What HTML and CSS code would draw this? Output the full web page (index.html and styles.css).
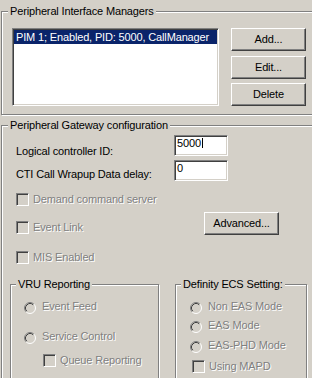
FILE: index.html
```html
<!DOCTYPE html>
<html>
<head>
<meta charset="utf-8">
<link rel="stylesheet" href="styles.css">
</head>
<body>
<section class="grp g-pim">
  <span class="legend">Peripheral Interface Managers</span>
  <div class="pim-row">
    <div class="listbox">
      <div class="item sel">PIM 1; Enabled, PID: 5000, CallManager</div>
    </div>
    <div class="btn-col">
      <button class="btn">Add...</button>
      <button class="btn b-edit">Edit...</button>
      <button class="btn b-del">Delete</button>
    </div>
  </div>
</section>

<section class="grp g-pg">
  <span class="legend">Peripheral Gateway configuration</span>
  <div class="frow r1">
    <span class="flabel">Logical controller ID:</span>
    <div class="edit">5000<span class="caret"></span></div>
  </div>
  <div class="frow r2">
    <span class="flabel">CTI Call Wrapup Data delay:</span>
    <div class="edit">0</div>
  </div>
  <div class="crow c-demand">
    <span class="cb"></span><span class="dis ctext">Demand command server</span>
  </div>
  <div class="crow c-event">
    <div class="chk">
      <span class="cb"></span><span class="dis ctext">Event Link</span>
    </div>
    <button class="btn">Advanced...</button>
  </div>
  <div class="crow c-mis">
    <span class="cb"></span><span class="dis ctext">MIS Enabled</span>
  </div>
  <div class="subgroups">
    <section class="grp g-vru">
      <span class="legend">VRU Reporting</span>
      <div class="rrow v-feed">
        <svg class="radio" width="12" height="12" viewBox="0 0 12 12"><circle cx="6" cy="6" r="5" fill="#D4D0C8"/><path d="M2.11 9.89A5.5 5.5 0 0 1 9.89 2.11" fill="none" stroke="#808080"/><path d="M9.89 2.11A5.5 5.5 0 0 1 2.11 9.89" fill="none" stroke="#fff"/><path d="M2.82 9.18A4.5 4.5 0 0 1 9.18 2.82" fill="none" stroke="#404040"/></svg>
        <span class="dis rtext">Event Feed</span>
      </div>
      <div class="rrow v-svc">
        <svg class="radio" width="12" height="12" viewBox="0 0 12 12"><circle cx="6" cy="6" r="5" fill="#D4D0C8"/><path d="M2.11 9.89A5.5 5.5 0 0 1 9.89 2.11" fill="none" stroke="#808080"/><path d="M9.89 2.11A5.5 5.5 0 0 1 2.11 9.89" fill="none" stroke="#fff"/><path d="M2.82 9.18A4.5 4.5 0 0 1 9.18 2.82" fill="none" stroke="#404040"/></svg>
        <span class="dis rtext">Service Control</span>
      </div>
      <div class="crow v-queue">
        <span class="cb"></span><span class="dis ctext">Queue Reporting</span>
      </div>
    </section>
    <section class="grp g-def">
      <span class="legend">Definity ECS Setting:</span>
      <div class="rrow d-non">
        <svg class="radio" width="12" height="12" viewBox="0 0 12 12"><circle cx="6" cy="6" r="5" fill="#D4D0C8"/><path d="M2.11 9.89A5.5 5.5 0 0 1 9.89 2.11" fill="none" stroke="#808080"/><path d="M9.89 2.11A5.5 5.5 0 0 1 2.11 9.89" fill="none" stroke="#fff"/><path d="M2.82 9.18A4.5 4.5 0 0 1 9.18 2.82" fill="none" stroke="#404040"/></svg>
        <span class="dis rtext">Non EAS Mode</span>
      </div>
      <div class="rrow d-eas">
        <svg class="radio" width="12" height="12" viewBox="0 0 12 12"><circle cx="6" cy="6" r="5" fill="#D4D0C8"/><path d="M2.11 9.89A5.5 5.5 0 0 1 9.89 2.11" fill="none" stroke="#808080"/><path d="M9.89 2.11A5.5 5.5 0 0 1 2.11 9.89" fill="none" stroke="#fff"/><path d="M2.82 9.18A4.5 4.5 0 0 1 9.18 2.82" fill="none" stroke="#404040"/></svg>
        <span class="dis rtext">EAS Mode</span>
      </div>
      <div class="rrow d-phd">
        <svg class="radio" width="12" height="12" viewBox="0 0 12 12"><circle cx="6" cy="6" r="5" fill="#D4D0C8"/><path d="M2.11 9.89A5.5 5.5 0 0 1 9.89 2.11" fill="none" stroke="#808080"/><path d="M9.89 2.11A5.5 5.5 0 0 1 2.11 9.89" fill="none" stroke="#fff"/><path d="M2.82 9.18A4.5 4.5 0 0 1 9.18 2.82" fill="none" stroke="#404040"/></svg>
        <span class="dis rtext">EAS-PHD Mode</span>
      </div>
      <div class="crow d-mapd">
        <span class="cb"></span><span class="dis ctext">Using MAPD</span>
      </div>
    </section>
  </div>
</section>
</body>
</html>
```

FILE: styles.css
```css
* { box-sizing: border-box; }
html, body { margin: 0; padding: 0; }
body {
  width: 312px;
  height: 378px;
  overflow: hidden;
  background: #D4D0C8;
  color: #000;
  font-family: "Liberation Sans", Arial, sans-serif;
  font-size: 11px;
  line-height: 13px;
  letter-spacing: -0.15px;
}

/* etched group box */
.grp {
  border: 1px solid #808080;
  box-shadow: inset 1px 1px 0 #fff, 1px 1px 0 #fff;
  display: flex;
  flex-direction: column;
  align-items: flex-start;
  flex: none;
}
.legend {
  margin: -7px 0 0 6px;
  padding: 0 2px;
  background: #D4D0C8;
  line-height: 13px;
  white-space: nowrap;
}

/* the outer group boxes continue past the right edge of the crop */
.g-pim { margin: 11px 0 0 1px; width: 311px; height: 104px; border-right: 0; }
.pim-row { display: flex; margin: 10px 0 0 10px; }

.listbox {
  width: 207px;
  height: 78px;
  background: #fff;
  border: 1px solid;
  border-color: #808080 #fff #fff #808080;
  box-shadow: inset 1px 1px 0 #404040, inset -1px -1px 0 #D4D0C8;
  padding: 1px;
}
.item { height: 14px; line-height: 14px; padding-left: 2px; white-space: nowrap; }
.item.sel { background: #0A246A; color: #fff; }

.btn-col { display: flex; flex-direction: column; margin-left: 12px; }
.btn {
  width: 75px;
  height: 23px;
  padding: 0;
  margin: 0;
  font: inherit;
  letter-spacing: inherit;
  color: #000;
  background: #D4D0C8;
  border: 1px solid;
  border-color: #fff #404040 #404040 #fff;
  box-shadow: inset -1px -1px 0 #808080;
  border-radius: 0;
  display: flex;
  align-items: center;
  justify-content: center;
}
.b-edit { margin-top: 5px; }
.b-del { margin-top: 4px; }

/* continues past the right and bottom edges of the crop */
.g-pg { margin: 10px 0 0 1px; width: 311px; height: 253px; border-right: 0; border-bottom: 0; }

.frow { display: flex; height: 21px; margin-left: 14px; }
.r1 { margin-top: 3px; }
.r2 { margin-top: 4px; }
.flabel { width: 158px; white-space: nowrap; }
.r1 .flabel { margin-top: 10px; }
.r2 .flabel { margin-top: 8px; }

.edit {
  width: 54px;
  height: 21px;
  background: #fff;
  border: 1px solid;
  border-color: #808080 #fff #fff #808080;
  box-shadow: inset 1px 1px 0 #404040, inset -1px -1px 0 #D4D0C8;
  padding: 1px 2px;
  line-height: 13px;
  white-space: nowrap;
}
.caret {
  display: inline-block;
  width: 1px;
  height: 10px;
  background: #000;
  vertical-align: -1px;
  margin-left: 1px;
}

.crow { display: flex; align-items: flex-start; }
.cb {
  width: 13px;
  height: 13px;
  flex: none;
  background: #D4D0C8;
  border: 1px solid;
  border-color: #808080 #fff #fff #808080;
  box-shadow: inset 1px 1px 0 #404040, inset -1px -1px 0 #D4D0C8;
}
.ctext { margin-left: 4px; white-space: nowrap; }
.dis { color: #808080; text-shadow: 1px 1px 0 #fff; }

.c-demand { margin: 12px 0 0 14px; }
.c-event { margin: 6px 0 0 14px; }
.c-event .chk { display: flex; align-items: flex-start; width: 188px; margin-top: 9px; }
.c-mis { margin: 16px 0 0 14px; }

.subgroups { display: flex; margin: 20px 0 0 8px; }
/* inner group boxes continue past the bottom edge of the crop */
.g-vru { width: 149px; height: 94px; border-bottom: 0; }
.g-def { width: 132px; height: 94px; margin-left: 16px; border-bottom: 0; }
.g-vru .legend, .g-def .legend { margin-left: 5px; }

.rrow { display: flex; align-items: flex-start; }
.radio { flex: none; display: block; }
.rtext { margin: -2px 0 0 6px; white-space: nowrap; }

.v-feed { margin: 11px 0 0 13px; }
.v-svc { margin: 18px 0 0 13px; }
.v-queue { margin: 10px 0 0 32px; }

.d-non { margin: 11px 0 0 14px; }
.d-eas { margin: 7px 0 0 14px; }
.d-phd { margin: 8px 0 0 14px; }
.d-mapd { margin: 7px 0 0 16px; }
```
